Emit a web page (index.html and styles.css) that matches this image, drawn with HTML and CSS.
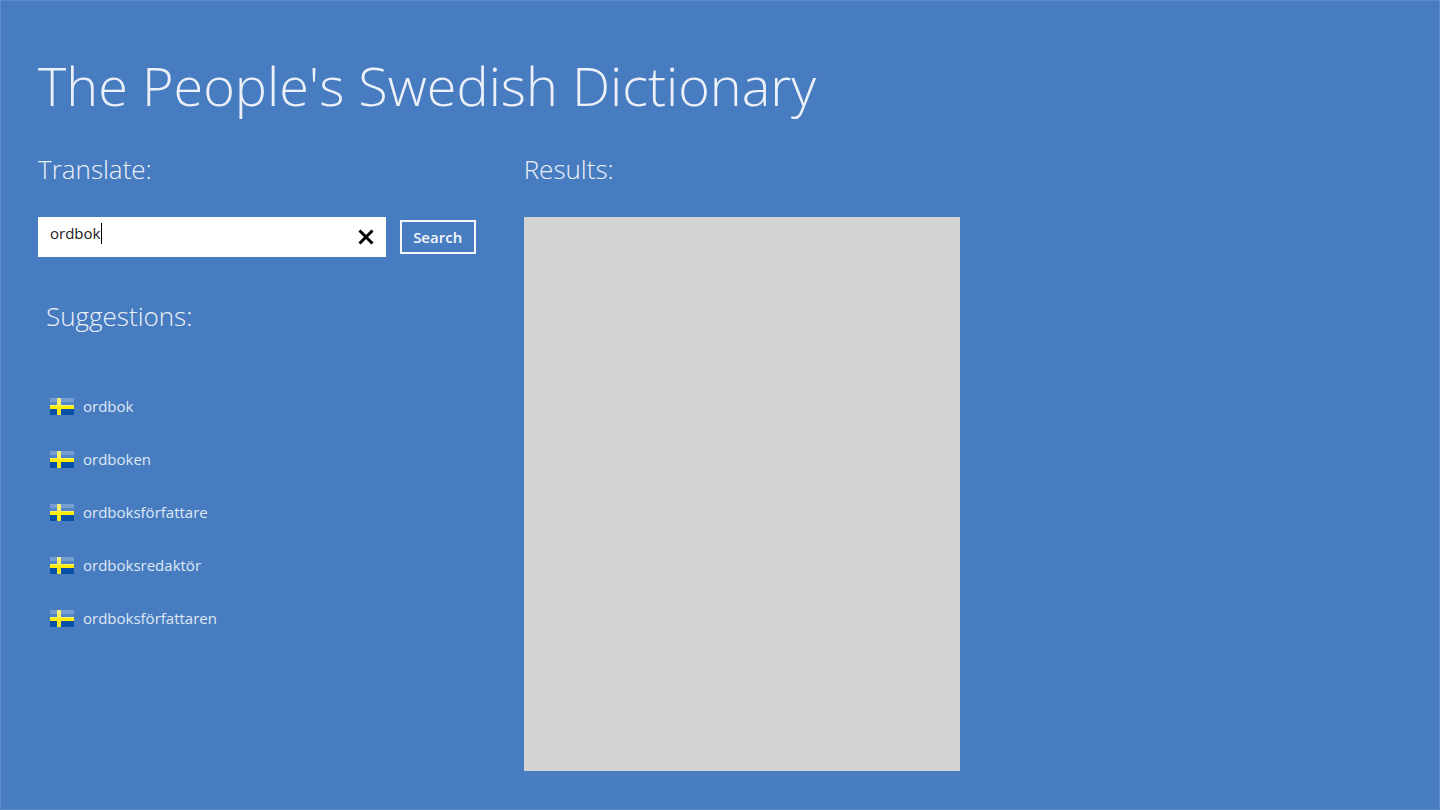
FILE: index.html
```html
<!DOCTYPE html>
<html lang="en">
<head>
<meta charset="utf-8">
<meta name="viewport" content="width=device-width, initial-scale=1">
<title>The People's Swedish Dictionary</title>
<link rel="stylesheet" href="styles.css">
</head>
<body>
<svg class="defs" aria-hidden="true">
  <defs>
    <linearGradient id="cross" x1="0" y1="0" x2="0" y2="1">
      <stop offset="0" stop-color="#f3ee7c"/>
      <stop offset=".4" stop-color="#fff35a"/>
      <stop offset=".55" stop-color="#ffee00"/>
      <stop offset="1" stop-color="#f5e930"/>
    </linearGradient>
    <symbol id="flag" viewBox="0 0 24 17">
      <rect width="24" height="17" fill="#0750a6"/>
      <rect width="24" height="5" fill="#759dcf"/>
      <rect y="4" width="24" height="3" fill="#5286c6"/>
      <rect y="7" width="24" height="4" fill="#ffee00"/>
      <rect y="7" width="24" height="1" fill="#fdf46a"/>
      <rect x="7" width="4" height="17" fill="url(#cross)"/>
    </symbol>
  </defs>
</svg>
<main class="page">
  <h1 class="title">The People's Swedish Dictionary</h1>
  <div class="columns">
    <section class="lookup">
      <label class="heading" for="word">Translate:</label>
      <form class="search">
        <div class="field">
          <input class="field-input" id="word" type="text" value="ordbok" autocomplete="off" spellcheck="false">
          <span class="caret"></span>
          <button class="clear" type="button" aria-label="Clear">
            <svg class="clear-icon" viewBox="0 0 16 16" aria-hidden="true"><path d="M1.5 1.5 14.5 14.5M14.5 1.5 1.5 14.5"/></svg>
          </button>
        </div>
        <button class="submit" type="button">Search</button>
      </form>
      <div class="suggestions">
        <h2 class="heading">Suggestions:</h2>
        <ul class="list">
          <li><a class="item" href="#ordbok"><svg class="flag" aria-hidden="true"><use href="#flag"/></svg>ordbok</a></li>
          <li><a class="item" href="#ordboken"><svg class="flag" aria-hidden="true"><use href="#flag"/></svg>ordboken</a></li>
          <li><a class="item" href="#ordboksforfattare"><svg class="flag" aria-hidden="true"><use href="#flag"/></svg>ordboksförfattare</a></li>
          <li><a class="item" href="#ordboksredaktor"><svg class="flag" aria-hidden="true"><use href="#flag"/></svg>ordboksredaktör</a></li>
          <li><a class="item" href="#ordboksforfattaren"><svg class="flag" aria-hidden="true"><use href="#flag"/></svg>ordboksförfattaren</a></li>
        </ul>
      </div>
    </section>
    <section class="results">
      <h2 class="heading">Results:</h2>
      <div class="results-panel"></div>
    </section>
  </div>
</main>
</body>
</html>
```
FILE: styles.css
```css
* { box-sizing: border-box; }

body {
  margin: 0;
  background: #487cc0;
  color: #ecf1f9;
  font-family: "Open Sans", "Noto Sans", sans-serif;
  font-size: 15px;
  line-height: 20px;
}

.defs { position: absolute; width: 0; height: 0; }

.page {
  display: flex;
  flex-direction: column;
  min-height: 100vh;
  padding: 44px 0 38px 37px;
  border: 1px solid #5b8dcd;
}

.title {
  margin: 0 0 28px;
  font-size: 54px;
  font-weight: 300;
  line-height: 80px;
}

.columns {
  flex: 1;
  display: grid;
  grid-template-columns: 438fr 437fr 431fr;
  gap: 48px;
}

.heading {
  display: block;
  margin: 0;
  font-size: 26px;
  font-weight: 300;
  line-height: 32px;
}

.search {
  display: flex;
  align-items: center;
  gap: 14px;
  margin-top: 32px;
}

.field {
  position: relative;
  flex: 1;
  display: flex;
  height: 40px;
  background: #fff;
}

.field-input {
  flex: 1;
  min-width: 0;
  padding: 0 0 8px 12px;
  border: 0;
  outline: 0;
  background: none;
  color: #1b1b1b;
  font: inherit;
}

.caret {
  position: absolute;
  top: 6px;
  left: 63px;
  width: 1px;
  height: 21px;
  background: #000;
}

.clear {
  display: grid;
  place-items: center;
  width: 40px;
  padding: 0;
  border: 0;
  background: none;
}

.clear-icon { width: 16px; height: 16px; fill: none; stroke: #000; stroke-width: 3; }

.submit {
  width: 76px;
  height: 34px;
  padding: 0;
  border: 2px solid #f4f7fc;
  background: none;
  color: #f4f7fc;
  font: inherit;
  font-weight: 600;
}

.suggestions { margin: 43px 0 0 8px; }

.list {
  display: grid;
  gap: 33px;
  margin: 64px 0 0;
  padding: 0 0 0 4px;
  list-style: none;
}

.item {
  display: flex;
  align-items: center;
  gap: 9px;
  color: #dfe8f5;
  text-decoration: none;
}

.flag { width: 24px; height: 17px; }

.results { display: flex; flex-direction: column; }

.results-panel {
  flex: 1;
  margin-top: 32px;
  background: #d3d3d3;
}
```
